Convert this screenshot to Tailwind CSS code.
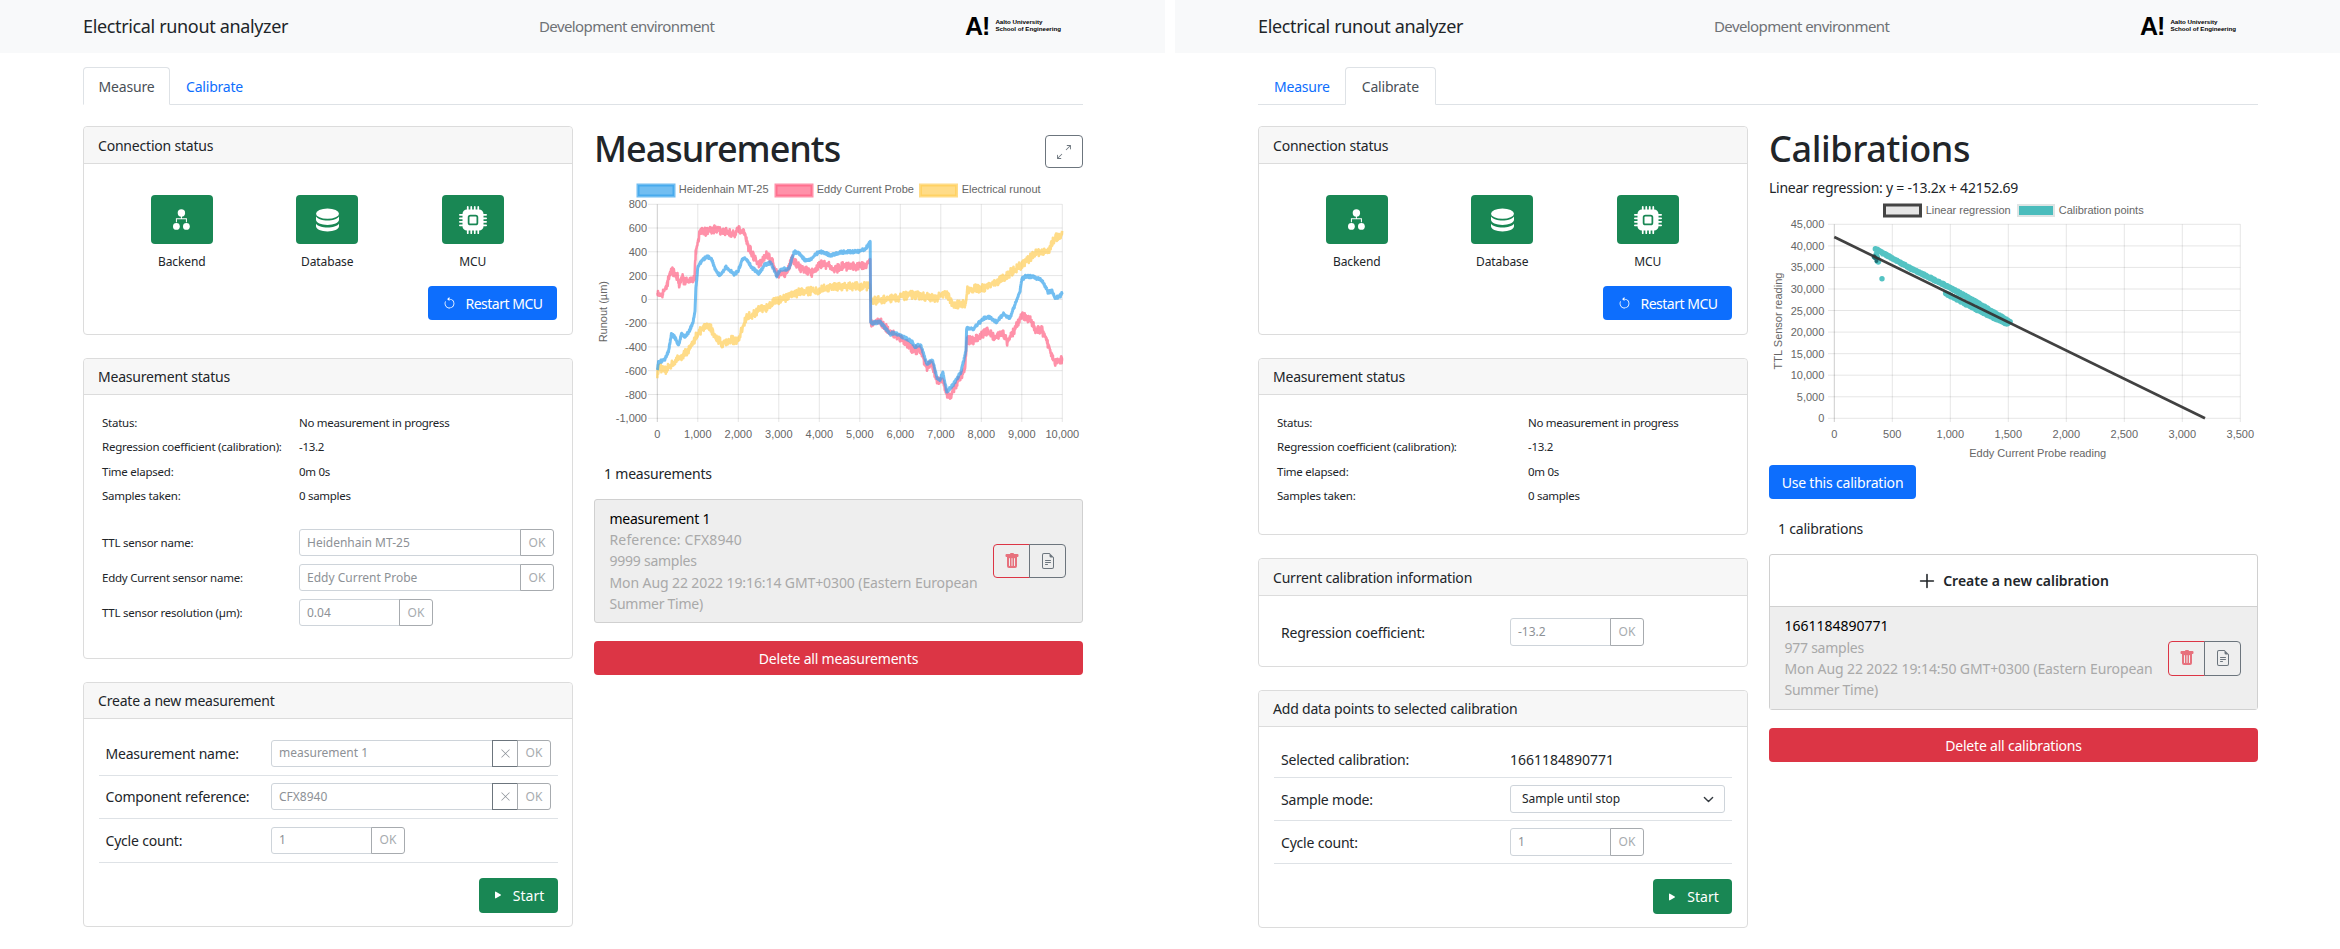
<!doctype html>
<html lang="en">
<head>
<meta charset="utf-8">
<title>Electrical runout analyzer</title>
<script src="https://cdn.jsdelivr.net/npm/@tailwindcss/browser@4"></script>
</head>
<body class="bg-white">
<svg class="hidden" xmlns="http://www.w3.org/2000/svg">
  <symbol id="i-backend" viewBox="0 0 17 21"><circle cx="8.4" cy="4" r="3.7"/><circle cx="3.4" cy="17.4" r="3.4"/><circle cx="13.4" cy="17.4" r="3.4"/><path d="M7.9 7h1v2.2h5v4h-1v-3H3.9v3h-1v-4h5z"/></symbol>
  <symbol id="i-db" viewBox="0 0 16 16"><ellipse cx="8" cy="3.6" rx="8" ry="3.6"/><path d="M0 5.6v2.2C0 9.8 3.6 11.4 8 11.4s8-1.6 8-3.6V5.6C14.6 7.4 11.6 8.4 8 8.4S1.4 7.4 0 5.6z"/><path d="M0 10.6v1.8C0 14.4 3.6 16 8 16s8-1.6 8-3.6v-1.8C14.6 12.4 11.6 13.2 8 13.2S1.4 12.4 0 10.6z"/></symbol>
  <symbol id="i-cpu" viewBox="0 0 16 16"><path d="M6.5 6a.5.5 0 0 0-.5.5v3a.5.5 0 0 0 .5.5h3a.5.5 0 0 0 .5-.5v-3a.5.5 0 0 0-.5-.5h-3z"/><path d="M5.5.5a.5.5 0 0 0-1 0V2A2.5 2.5 0 0 0 2 4.5H.5a.5.5 0 0 0 0 1H2v1H.5a.5.5 0 0 0 0 1H2v1H.5a.5.5 0 0 0 0 1H2v1H.5a.5.5 0 0 0 0 1H2A2.5 2.5 0 0 0 4.5 14v1.5a.5.5 0 0 0 1 0V14h1v1.5a.5.5 0 0 0 1 0V14h1v1.5a.5.5 0 0 0 1 0V14h1v1.5a.5.5 0 0 0 1 0V14a2.5 2.5 0 0 0 2.5-2.5h1.5a.5.5 0 0 0 0-1H14v-1h1.5a.5.5 0 0 0 0-1H14v-1h1.5a.5.5 0 0 0 0-1H14v-1h1.5a.5.5 0 0 0 0-1H14A2.5 2.5 0 0 0 11.5 2V.5a.5.5 0 0 0-1 0V2h-1V.5a.5.5 0 0 0-1 0V2h-1V.5a.5.5 0 0 0-1 0V2h-1V.5zm1 4.5h3A1.5 1.5 0 0 1 11 6.5v3A1.5 1.5 0 0 1 9.5 11h-3A1.5 1.5 0 0 1 5 9.5v-3A1.5 1.5 0 0 1 6.5 5z"/></symbol>
  <symbol id="i-restart" viewBox="0 0 16 16"><path fill-rule="evenodd" d="M8 3a5 5 0 1 1-4.546 2.914.5.5 0 0 0-.908-.417A6 6 0 1 0 8 2v1z"/><path d="M8 4.466V.534a.25.25 0 0 0-.41-.192L5.23 2.308a.25.25 0 0 0 0 .384l2.36 1.966A.25.25 0 0 0 8 4.466z"/></symbol>
  <symbol id="i-expand" viewBox="0 0 16 16"><path fill-rule="evenodd" d="M5.828 10.172a.5.5 0 0 0-.707 0l-4.096 4.096V11.5a.5.5 0 0 0-1 0v3.975a.5.5 0 0 0 .5.5H4.5a.5.5 0 0 0 0-1H1.732l4.096-4.096a.5.5 0 0 0 0-.707zm4.344-4.344a.5.5 0 0 0 .707 0l4.096-4.096V4.5a.5.5 0 1 0 1 0V.525a.5.5 0 0 0-.5-.5H11.5a.5.5 0 0 0 0 1h2.768l-4.096 4.096a.5.5 0 0 0 0 .707z"/></symbol>
  <symbol id="i-trash" viewBox="0 0 16 16"><path d="M2.5 1a1 1 0 0 0-1 1v1a1 1 0 0 0 1 1H3v9a2 2 0 0 0 2 2h6a2 2 0 0 0 2-2V4h.5a1 1 0 0 0 1-1V2a1 1 0 0 0-1-1H10a1 1 0 0 0-1-1H7a1 1 0 0 0-1 1H2.5zm3 4a.5.5 0 0 1 .5.5v7a.5.5 0 0 1-1 0v-7a.5.5 0 0 1 .5-.5zM8 5a.5.5 0 0 1 .5.5v7a.5.5 0 0 1-1 0v-7A.5.5 0 0 1 8 5zm3 .5v7a.5.5 0 0 1-1 0v-7a.5.5 0 0 1 1 0z"/></symbol>
  <symbol id="i-file" viewBox="0 0 16 16"><path d="M5.5 7a.5.5 0 0 0 0 1h5a.5.5 0 0 0 0-1h-5zM5 9.5a.5.5 0 0 1 .5-.5h5a.5.5 0 0 1 0 1h-5a.5.5 0 0 1-.5-.5zm0 2a.5.5 0 0 1 .5-.5h2a.5.5 0 0 1 0 1h-2a.5.5 0 0 1-.5-.5z"/><path d="M9.5 0H4a2 2 0 0 0-2 2v12a2 2 0 0 0 2 2h8a2 2 0 0 0 2-2V4.5L9.5 0zm0 1v2A1.5 1.5 0 0 0 11 4.5h2V14a1 1 0 0 1-1 1H4a1 1 0 0 1-1-1V2a1 1 0 0 1 1-1h5.5z"/></symbol>
  <symbol id="i-play" viewBox="0 0 16 16"><path d="m11.596 8.697-6.363 3.692c-.54.313-1.233-.066-1.233-.697V4.308c0-.63.692-1.01 1.233-.696l6.363 3.692a.802.802 0 0 1 0 1.393z"/></symbol>
  <symbol id="i-x" viewBox="0 0 16 16"><path d="M2.146 2.854a.5.5 0 1 1 .708-.708L8 7.293l5.146-5.147a.5.5 0 0 1 .708.708L8.707 8l5.147 5.146a.5.5 0 0 1-.708.708L8 8.707l-5.146 5.147a.5.5 0 0 1-.708-.708L7.293 8 2.146 2.854Z"/></symbol>
  <symbol id="i-plus" viewBox="0 0 16 16"><path fill-rule="evenodd" d="M8 1.6a.7.7 0 0 1 .7.7v5h5a.7.7 0 0 1 0 1.4h-5v5a.7.7 0 0 1-1.4 0v-5h-5a.7.7 0 0 1 0-1.4h5v-5A.7.7 0 0 1 8 1.6Z"/></symbol>
</svg>

<div class="flex gap-[10px] w-[2340px] h-[949px] overflow-hidden font-['Noto_Sans',sans-serif] text-[#212529] text-[14px]">

  <!-- ================= MEASURE ================= -->
  <section class="w-[1165px] shrink-0">
    <header class="h-[53px] bg-[#f8f9fa] pl-[83px] pr-[82px] flex items-center">
      <div class="w-[456px] text-[18px] tracking-[-0.35px]">Electrical runout analyzer</div>
      <div class="w-[426px] text-[15px] text-[#6f7276] tracking-[-0.6px]">Development environment</div>
      <div class="flex items-center gap-[6px] text-black font-['Liberation_Sans',sans-serif]">
        <span class="font-bold text-[25px] leading-[25px] tracking-[-1px]">A!</span>
        <span class="font-bold text-[6.2px] leading-[7px] whitespace-nowrap pb-[3px]">Aalto University<br>School of Engineering</span>
      </div>
    </header>
    <div class="pl-[83px] pr-[82px]">
      <nav class="mt-[14px] h-[38px] border-b border-[#dee2e6] flex">
        <div class="h-[38px] w-[87px] border border-[#dee2e6] border-b-white bg-white rounded-t-[4px] flex items-center justify-center text-[#495057] tracking-[-0.2px]">Measure</div>
        <div class="h-[38px] pl-[16px] flex items-center text-[#0d6efd] tracking-[-0.2px]">Calibrate</div>
      </nav>
      <div class="mt-[21px] grid grid-cols-[490px_490px] gap-[21px]">
        <div class="flex flex-col gap-[23px]">
          <!-- Connection -->
          <div class="border border-[#dcdcdc] rounded-[4px] h-[209px]">
            <div class="h-[37px] bg-[#f7f7f7] border-b border-[#dcdcdc] rounded-t-[4px] px-[14px] flex items-center tracking-[-0.2px]">Connection status</div>
            <div class="pt-[31px] pl-[25px]">
              <div class="grid grid-cols-[145.5px_145.5px_145.5px]">
                <div class="flex flex-col items-center"><div class="w-[62px] h-[49px] bg-[#198754] rounded-[4px] flex items-center justify-center"><svg class="w-[17px] h-[21px] fill-white"><use href="#i-backend"/></svg></div><div class="mt-[9px] text-[12px] leading-[18px] tracking-[-0.1px]">Backend</div></div>
                <div class="flex flex-col items-center"><div class="w-[62px] h-[49px] bg-[#198754] rounded-[4px] flex items-center justify-center"><svg class="w-[23px] h-[26px] fill-white"><use href="#i-db"/></svg></div><div class="mt-[9px] text-[12px] leading-[18px] tracking-[-0.1px]">Database</div></div>
                <div class="flex flex-col items-center"><div class="w-[62px] h-[49px] bg-[#198754] rounded-[4px] flex items-center justify-center"><svg class="w-[28px] h-[28px] fill-white"><use href="#i-cpu"/></svg></div><div class="mt-[9px] text-[12px] leading-[18px] tracking-[-0.1px]">MCU</div></div>
              </div>
              <div class="mt-[15px] flex justify-end pr-[15px]">
                <button class="w-[129px] h-[34px] bg-[#0d6efd] text-white rounded-[4px] flex items-center justify-center gap-[10px] tracking-[-0.5px]"><svg class="w-[13px] h-[13px] fill-white"><use href="#i-restart"/></svg>Restart MCU</button>
              </div>
            </div>
          </div>
          <!-- Status -->
          <div class="border border-[#dcdcdc] rounded-[4px] h-[301px]">
            <div class="h-[36px] bg-[#f7f7f7] border-b border-[#dcdcdc] rounded-t-[4px] px-[14px] flex items-center tracking-[-0.2px]">Measurement status</div>
            <div class="pt-[15px] pl-[18px] text-[11.5px] tracking-[-0.25px]">
              <div class="h-[24.5px] flex items-center"><span class="w-[197px]">Status:</span><span class="tracking-[-0.3px]">No measurement in progress</span></div>
              <div class="h-[24.5px] flex items-center"><span class="w-[197px]">Regression coefficient (calibration):</span><span class="tracking-[-0.3px]">-13.2</span></div>
              <div class="h-[24.5px] flex items-center"><span class="w-[197px]">Time elapsed:</span><span class="tracking-[-0.3px]">0m 0s</span></div>
              <div class="h-[24.5px] flex items-center"><span class="w-[197px]">Samples taken:</span><span class="tracking-[-0.3px]">0 samples</span></div>
              <div class="mt-[21px] flex flex-col gap-[8px]">
                <div class="h-[27px] flex items-center"><span class="w-[197px]">TTL sensor name:</span><div class="w-[222px] h-[27px] border border-[#ced4da] rounded-l-[3px] px-[7px] flex items-center text-[12px] text-[#8d9196] tracking-normal">Heidenhain MT-25</div><div class="w-[34px] h-[27px] -ml-px border border-[#a7abaf] rounded-r-[3px] flex items-center justify-center text-[12px] text-[#a7abaf] tracking-normal">OK</div></div>
                <div class="h-[27px] flex items-center"><span class="w-[197px]">Eddy Current sensor name:</span><div class="w-[222px] h-[27px] border border-[#ced4da] rounded-l-[3px] px-[7px] flex items-center text-[12px] text-[#8d9196] tracking-normal">Eddy Current Probe</div><div class="w-[34px] h-[27px] -ml-px border border-[#a7abaf] rounded-r-[3px] flex items-center justify-center text-[12px] text-[#a7abaf] tracking-normal">OK</div></div>
                <div class="h-[27px] flex items-center"><span class="w-[197px]">TTL sensor resolution (µm):</span><div class="w-[101px] h-[27px] border border-[#ced4da] rounded-l-[3px] px-[7px] flex items-center text-[12px] text-[#8d9196] tracking-normal">0.04</div><div class="w-[34px] h-[27px] -ml-px border border-[#a7abaf] rounded-r-[3px] flex items-center justify-center text-[12px] text-[#a7abaf] tracking-normal">OK</div></div>
              </div>
            </div>
          </div>
          <!-- Create -->
          <div class="border border-[#dcdcdc] rounded-[4px] h-[245px]">
            <div class="h-[36px] bg-[#f7f7f7] border-b border-[#dcdcdc] rounded-t-[4px] px-[14px] flex items-center tracking-[-0.2px]">Create a new measurement</div>
            <div class="pt-[13px] px-[14.5px]">
              <div class="h-[43.5px] border-b border-[#dee2e6] flex items-center pl-[7px] tracking-[-0.2px]"><span class="w-[165.5px]">Measurement name:</span><div class="w-[222px] h-[27px] border border-[#ced4da] rounded-l-[3px] px-[7px] flex items-center text-[12px] text-[#8d9196] tracking-normal">measurement 1</div><div class="w-[26px] h-[27px] -ml-px border border-[#6c757d] flex items-center justify-center"><svg class="w-[11px] h-[11px] fill-[#8a9097]"><use href="#i-x"/></svg></div><div class="w-[34px] h-[27px] -ml-px border border-[#a7abaf] rounded-r-[3px] flex items-center justify-center text-[12px] text-[#a7abaf] tracking-normal">OK</div></div>
              <div class="h-[43.5px] border-b border-[#dee2e6] flex items-center pl-[7px] tracking-[-0.2px]"><span class="w-[165.5px]">Component reference:</span><div class="w-[222px] h-[27px] border border-[#ced4da] rounded-l-[3px] px-[7px] flex items-center text-[12px] text-[#8d9196] tracking-normal">CFX8940</div><div class="w-[26px] h-[27px] -ml-px border border-[#6c757d] flex items-center justify-center"><svg class="w-[11px] h-[11px] fill-[#8a9097]"><use href="#i-x"/></svg></div><div class="w-[34px] h-[27px] -ml-px border border-[#a7abaf] rounded-r-[3px] flex items-center justify-center text-[12px] text-[#a7abaf] tracking-normal">OK</div></div>
              <div class="h-[43.5px] border-b border-[#dee2e6] flex items-center pl-[7px] tracking-[-0.2px]"><span class="w-[165.5px]">Cycle count:</span><div class="w-[101px] h-[27px] border border-[#ced4da] rounded-l-[3px] px-[7px] flex items-center text-[12px] text-[#8d9196] tracking-normal">1</div><div class="w-[34px] h-[27px] -ml-px border border-[#a7abaf] rounded-r-[3px] flex items-center justify-center text-[12px] text-[#a7abaf] tracking-normal">OK</div></div>
              <div class="mt-[15px] flex justify-end">
                <button class="w-[79px] h-[35px] bg-[#198754] text-white rounded-[4px] flex items-center justify-center gap-[9px]"><svg class="w-[12px] h-[12px] fill-white"><use href="#i-play"/></svg>Start</button>
              </div>
            </div>
          </div>
        </div>

        <!-- Measurements column -->
        <div class="w-[489px]">
          <div class="h-[50px] flex items-start justify-between">
            <h1 class="text-[36px] leading-[46px] font-medium tracking-[-1px]">Measurements</h1>
            <button class="mt-[9px] w-[38px] h-[33px] border border-[#6c757d] rounded-[4px] flex items-center justify-center"><svg class="w-[14px] h-[14px] fill-[#6c757d]"><use href="#i-expand"/></svg></button>
          </div>
          <svg id="chart1" class="block w-[489px] h-[270px] font-['Liberation_Sans',sans-serif] text-[11px] fill-[#666]" viewBox="594 176 489 270">
            <path d="M648 204.3H1062.3M648 228H1062.3M648 251.8H1062.3M648 275.6H1062.3M648 299.4H1062.3M648 323.1H1062.3M648 346.9H1062.3M648 370.7H1062.3M648 394.5H1062.3M648 418.3H1062.3M697.8 204.3V422M738.3 204.3V422M778.8 204.3V422M819.3 204.3V422M859.8 204.3V422M900.3 204.3V422M940.8 204.3V422M981.3 204.3V422M1021.8 204.3V422M1062.3 204.3V422" stroke="rgba(0,0,0,.1)" fill="none"/>
            <path d="M657.3 204.3V422" stroke="rgba(0,0,0,.2)" fill="none"/>
            <path id="s-y" fill="none" stroke="rgba(255,205,86,.7)" stroke-width="2.6" stroke-linejoin="round"/>
            <path id="s-r" fill="none" stroke="rgba(255,99,132,.7)" stroke-width="2.6" stroke-linejoin="round"/>
            <path id="s-b" fill="none" stroke="rgba(54,162,235,.7)" stroke-width="3" stroke-linejoin="round"/>
            <rect x="638" y="185" width="36" height="11" fill="rgba(54,162,235,.7)" stroke="rgba(54,162,235,.7)" stroke-width="3"/>
            <rect x="776" y="185" width="36" height="11" fill="rgba(255,99,132,.7)" stroke="rgba(255,99,132,.7)" stroke-width="3"/>
            <rect x="920.5" y="185" width="36" height="11" fill="rgba(255,205,86,.7)" stroke="rgba(255,205,86,.7)" stroke-width="3"/>
            <text x="678.7" y="193">Heidenhain MT-25</text><text x="816.7" y="193">Eddy Current Probe</text><text x="961.7" y="193">Electrical runout</text>
            <g text-anchor="end"><text x="647" y="208">800</text><text x="647" y="232">600</text><text x="647" y="255.8">400</text><text x="647" y="279.6">200</text><text x="647" y="303.4">0</text><text x="647" y="327">-200</text><text x="647" y="351">-400</text><text x="647" y="374.7">-600</text><text x="647" y="398.5">-800</text><text x="647" y="422.3">-1,000</text></g>
            <g text-anchor="middle"><text x="657.3" y="438">0</text><text x="697.8" y="438">1,000</text><text x="738.3" y="438">2,000</text><text x="778.8" y="438">3,000</text><text x="819.3" y="438">4,000</text><text x="859.8" y="438">5,000</text><text x="900.3" y="438">6,000</text><text x="940.8" y="438">7,000</text><text x="981.3" y="438">8,000</text><text x="1021.8" y="438">9,000</text><text x="1062.3" y="438">10,000</text></g>
            <text text-anchor="middle" transform="translate(606.5 311.7) rotate(-90)">Runout (µm)</text>
          </svg>
          <div class="mt-[17px] pl-[10px] leading-[21px] tracking-[-0.2px]">1 measurements</div>
          <div class="mt-[15px] h-[124px] bg-[#eeeeee] border border-[#d0d0d0] rounded-[3px] pl-[14.5px] pr-[16px] flex items-center justify-between">
            <div class="leading-[21.3px] text-[#a9a9a9] whitespace-nowrap tracking-[-0.25px]"><div class="text-black">measurement 1</div><span class="tracking-[0.15px]">Reference: CFX8940</span><br>9999 samples<br><span class="tracking-[-0.1px]">Mon Aug 22 2022 19:16:14 GMT+0300 (Eastern European</span><br>Summer Time)</div>
            <div class="flex"><button class="w-[37px] h-[34px] border border-[#dc3545] rounded-l-[4px] flex items-center justify-center"><svg class="w-[16px] h-[16px] fill-[#e7717d]"><use href="#i-trash"/></svg></button><button class="w-[37px] h-[34px] -ml-px border border-[#6c757d] rounded-r-[4px] flex items-center justify-center"><svg class="w-[16px] h-[16px] fill-[#6c757d]"><use href="#i-file"/></svg></button></div>
          </div>
          <button class="mt-[18px] w-full h-[34px] bg-[#dc3545] text-white rounded-[4px] tracking-[-0.2px]">Delete all measurements</button>
        </div>
      </div>
    </div>
  </section>

  <!-- ================= CALIBRATE ================= -->
  <section class="w-[1165px] shrink-0">
    <header class="h-[53px] bg-[#f8f9fa] pl-[83px] pr-[82px] flex items-center">
      <div class="w-[456px] text-[18px] tracking-[-0.35px]">Electrical runout analyzer</div>
      <div class="w-[426px] text-[15px] text-[#6f7276] tracking-[-0.6px]">Development environment</div>
      <div class="flex items-center gap-[6px] text-black font-['Liberation_Sans',sans-serif]">
        <span class="font-bold text-[25px] leading-[25px] tracking-[-1px]">A!</span>
        <span class="font-bold text-[6.2px] leading-[7px] whitespace-nowrap pb-[3px]">Aalto University<br>School of Engineering</span>
      </div>
    </header>
    <div class="pl-[83px] pr-[82px]">
      <nav class="mt-[14px] h-[38px] border-b border-[#dee2e6] flex">
        <div class="h-[38px] pl-[16px] pr-[15px] flex items-center text-[#0d6efd] tracking-[-0.2px]">Measure</div>
        <div class="h-[38px] w-[91px] border border-[#dee2e6] border-b-white bg-white rounded-t-[4px] flex items-center justify-center text-[#495057] tracking-[-0.2px]">Calibrate</div>
      </nav>
      <div class="mt-[21px] grid grid-cols-[490px_490px] gap-[21px]">
        <div class="flex flex-col gap-[23px]">
          <div class="border border-[#dcdcdc] rounded-[4px] h-[209px]">
            <div class="h-[37px] bg-[#f7f7f7] border-b border-[#dcdcdc] rounded-t-[4px] px-[14px] flex items-center tracking-[-0.2px]">Connection status</div>
            <div class="pt-[31px] pl-[25px]">
              <div class="grid grid-cols-[145.5px_145.5px_145.5px]">
                <div class="flex flex-col items-center"><div class="w-[62px] h-[49px] bg-[#198754] rounded-[4px] flex items-center justify-center"><svg class="w-[17px] h-[21px] fill-white"><use href="#i-backend"/></svg></div><div class="mt-[9px] text-[12px] leading-[18px] tracking-[-0.1px]">Backend</div></div>
                <div class="flex flex-col items-center"><div class="w-[62px] h-[49px] bg-[#198754] rounded-[4px] flex items-center justify-center"><svg class="w-[23px] h-[26px] fill-white"><use href="#i-db"/></svg></div><div class="mt-[9px] text-[12px] leading-[18px] tracking-[-0.1px]">Database</div></div>
                <div class="flex flex-col items-center"><div class="w-[62px] h-[49px] bg-[#198754] rounded-[4px] flex items-center justify-center"><svg class="w-[28px] h-[28px] fill-white"><use href="#i-cpu"/></svg></div><div class="mt-[9px] text-[12px] leading-[18px] tracking-[-0.1px]">MCU</div></div>
              </div>
              <div class="mt-[15px] flex justify-end pr-[15px]">
                <button class="w-[129px] h-[34px] bg-[#0d6efd] text-white rounded-[4px] flex items-center justify-center gap-[10px] tracking-[-0.5px]"><svg class="w-[13px] h-[13px] fill-white"><use href="#i-restart"/></svg>Restart MCU</button>
              </div>
            </div>
          </div>
          <div class="border border-[#dcdcdc] rounded-[4px] h-[177px]">
            <div class="h-[36px] bg-[#f7f7f7] border-b border-[#dcdcdc] rounded-t-[4px] px-[14px] flex items-center tracking-[-0.2px]">Measurement status</div>
            <div class="pt-[15px] pl-[18px] text-[11.5px] tracking-[-0.25px]">
              <div class="h-[24.5px] flex items-center"><span class="w-[251px]">Status:</span><span class="tracking-[-0.3px]">No measurement in progress</span></div>
              <div class="h-[24.5px] flex items-center"><span class="w-[251px]">Regression coefficient (calibration):</span><span class="tracking-[-0.3px]">-13.2</span></div>
              <div class="h-[24.5px] flex items-center"><span class="w-[251px]">Time elapsed:</span><span class="tracking-[-0.3px]">0m 0s</span></div>
              <div class="h-[24.5px] flex items-center"><span class="w-[251px]">Samples taken:</span><span class="tracking-[-0.3px]">0 samples</span></div>
            </div>
          </div>
          <div class="border border-[#dcdcdc] rounded-[4px] h-[109px]">
            <div class="h-[37px] bg-[#f7f7f7] border-b border-[#dcdcdc] rounded-t-[4px] px-[14px] flex items-center tracking-[-0.2px]">Current calibration information</div>
            <div class="pt-[22px] pl-[22px] flex items-center tracking-[-0.2px]"><span class="w-[229px]">Regression coefficient:</span><div class="w-[101px] h-[28px] border border-[#ced4da] rounded-l-[3px] px-[7px] flex items-center text-[12px] text-[#8d9196] tracking-normal">-13.2</div><div class="w-[34px] h-[28px] -ml-px border border-[#a7abaf] rounded-r-[3px] flex items-center justify-center text-[12px] text-[#a7abaf] tracking-normal">OK</div></div>
          </div>
          <div class="border border-[#dcdcdc] rounded-[4px] h-[238px]">
            <div class="h-[36px] bg-[#f7f7f7] border-b border-[#dcdcdc] rounded-t-[4px] px-[14px] flex items-center tracking-[-0.2px]">Add data points to selected calibration</div>
            <div class="pt-[8px] px-[15px]">
              <div class="h-[43px] border-b border-[#dee2e6] flex items-center pl-[7px] pt-[6px] tracking-[-0.2px]"><span class="w-[229px]">Selected calibration:</span><span class="tracking-normal">1661184890771</span></div>
              <div class="h-[43px] border-b border-[#dee2e6] flex items-center pl-[7px] tracking-[-0.2px]"><span class="w-[229px]">Sample mode:</span><div class="w-[215px] h-[28px] border border-[#ced4da] rounded-[3px] pl-[11px] pr-[10px] flex items-center justify-between text-[12px] tracking-normal">Sample until stop<svg class="w-[11px] h-[11px]" viewBox="0 0 16 16" fill="none" stroke="#343a40" stroke-width="2" stroke-linecap="round" stroke-linejoin="round"><path d="m2 5 6 6 6-6"/></svg></div></div>
              <div class="h-[43px] border-b border-[#dee2e6] flex items-center pl-[7px] tracking-[-0.2px]"><span class="w-[229px]">Cycle count:</span><div class="w-[101px] h-[28px] border border-[#ced4da] rounded-l-[3px] px-[7px] flex items-center text-[12px] text-[#8d9196] tracking-normal">1</div><div class="w-[34px] h-[28px] -ml-px border border-[#a7abaf] rounded-r-[3px] flex items-center justify-center text-[12px] text-[#a7abaf] tracking-normal">OK</div></div>
              <div class="mt-[15px] flex justify-end">
                <button class="w-[79px] h-[35px] bg-[#198754] text-white rounded-[4px] flex items-center justify-center gap-[9px]"><svg class="w-[12px] h-[12px] fill-white"><use href="#i-play"/></svg>Start</button>
              </div>
            </div>
          </div>
        </div>

        <!-- Calibrations column -->
        <div class="w-[489px]">
          <h1 class="text-[36px] leading-[46px] font-medium tracking-[-0.4px] h-[51px]">Calibrations</h1>
          <div class="leading-[21px] tracking-[-0.25px]">Linear regression: y = -13.2x + 42152.69</div>
          <svg id="chart2" class="block w-[489px] h-[267px] font-['Liberation_Sans',sans-serif] text-[11px] fill-[#666]" viewBox="1769 200 489 267">
            <path d="M1828 226.3H2240.3M1828 247.9H2240.3M1828 269.4H2240.3M1828 291H2240.3M1828 312.5H2240.3M1828 334.1H2240.3M1828 355.7H2240.3M1828 377.2H2240.3M1828 398.8H2240.3M1828 420.3H2240.3M1892.3 226.3V424M1950.3 226.3V424M2008.3 226.3V424M2066.3 226.3V424M2124.3 226.3V424M2182.3 226.3V424M2240.3 226.3V424" stroke="rgba(0,0,0,.1)" fill="none"/>
            <path d="M1834.3 226.3V424" stroke="rgba(0,0,0,.2)" fill="none"/>
            <path id="pts" fill="none" stroke="rgba(75,192,192,.95)" stroke-width="5.4" stroke-linecap="round"/>
            <path id="pts-dark" fill="none" stroke="#1f6d72" stroke-width="4" stroke-linecap="round"/>
            <path d="M1834.3 239L2205 420.3" stroke="#333" stroke-opacity=".93" stroke-width="2.7" fill="none"/>
            <rect x="1884.5" y="207" width="36" height="11" fill="#e6e6e6" stroke="#444" stroke-width="3"/>
            <rect x="2018" y="207" width="36" height="11" fill="#4abcbc" stroke="#dfe5e5" stroke-width="2"/>
            <text x="1925.7" y="215.5">Linear regression</text><text x="2058.7" y="215.5">Calibration points</text>
            <g text-anchor="end"><text x="1824.3" y="230">45,000</text><text x="1824.3" y="251.9">40,000</text><text x="1824.3" y="273.4">35,000</text><text x="1824.3" y="295">30,000</text><text x="1824.3" y="316.5">25,000</text><text x="1824.3" y="338.1">20,000</text><text x="1824.3" y="359.7">15,000</text><text x="1824.3" y="381.2">10,000</text><text x="1824.3" y="402.8">5,000</text><text x="1824.3" y="424.3">0</text></g>
            <g text-anchor="middle"><text x="1834.3" y="440">0</text><text x="1892.3" y="440">500</text><text x="1950.3" y="440">1,000</text><text x="2008.3" y="440">1,500</text><text x="2066.3" y="440">2,000</text><text x="2124.3" y="440">2,500</text><text x="2182.3" y="440">3,000</text><text x="2240.3" y="440">3,500</text><text x="2037.7" y="459">Eddy Current Probe reading</text></g>
            <text text-anchor="middle" transform="translate(1782 323) rotate(-90)">TTL Sensor reading</text>
          </svg>
          <button class="block w-[147px] h-[34px] bg-[#0d6efd] text-white rounded-[4px] tracking-[-0.2px]">Use this calibration</button>
          <div class="mt-[19px] pl-[9px] leading-[21px] tracking-[-0.2px]">1 calibrations</div>
          <div class="mt-[15px] border border-[#d0d0d0] rounded-[3px]">
            <div class="h-[52px] border-b border-[#d0d0d0] flex items-center justify-center gap-[7px] font-semibold"><svg class="w-[18px] h-[18px] fill-[#212529]"><use href="#i-plus"/></svg>Create a new calibration</div>
            <div class="h-[102px] bg-[#eeeeee] pl-[14.5px] pr-[16px] flex items-center justify-between">
              <div class="leading-[21.3px] text-[#a9a9a9] whitespace-nowrap tracking-[-0.25px]"><div class="text-black tracking-normal">1661184890771</div>977 samples<br><span class="tracking-[-0.1px]">Mon Aug 22 2022 19:14:50 GMT+0300 (Eastern European</span><br>Summer Time)</div>
              <div class="flex"><button class="w-[37px] h-[35px] border border-[#dc3545] rounded-l-[4px] flex items-center justify-center"><svg class="w-[16px] h-[16px] fill-[#e7717d]"><use href="#i-trash"/></svg></button><button class="w-[37px] h-[35px] -ml-px border border-[#6c757d] rounded-r-[4px] flex items-center justify-center"><svg class="w-[16px] h-[16px] fill-[#6c757d]"><use href="#i-file"/></svg></button></div>
            </div>
          </div>
          <button class="mt-[18px] w-full h-[34px] bg-[#dc3545] text-white rounded-[4px] tracking-[-0.2px]">Delete all calibrations</button>
        </div>
      </div>
    </div>
  </section>
</div>

<script>
(function () {
  var seed = 12345;
  function rnd() { seed = (seed * 16807) % 2147483647; return seed / 2147483647; }
  function X(v) { return 657.3 + v * 405 / 10000; }
  function Y(v) { return 204.3 + (800 - v) * 214 / 1800; }
  var blue = [0,-600,30,-530,200,-500,280,-430,350,-290,440,-320,520,-390,600,-290,680,-320,780,-270,880,-200,930,-100,950,80,1000,270,1100,330,1250,360,1350,330,1450,240,1550,200,1700,270,1900,210,2000,240,2100,340,2200,340,2350,260,2450,240,2500,210,2650,290,2800,310,2950,200,3050,250,3250,260,3380,400,3500,390,3650,330,3800,340,3950,390,4050,400,4300,370,4500,395,5000,405,5150,430,5260,490,5265,-200,5500,-190,5750,-290,5850,-280,6100,-320,6300,-360,6350,-400,6500,-380,6650,-540,6800,-510,6900,-660,6980,-680,7050,-610,7150,-780,7300,-720,7500,-610,7620,-430,7640,-240,7800,-250,8050,-160,8200,-150,8380,-190,8550,-120,8700,-160,8950,60,9000,170,9100,195,9250,190,9450,170,9550,130,9650,60,9750,70,9820,10,9950,30,10000,60];
  var red = [0,50,100,40,200,90,280,170,360,260,420,210,500,190,540,110,600,190,680,150,850,150,920,190,950,400,1020,520,1050,580,1200,570,1400,590,1700,570,1900,540,1950,590,2150,570,2250,440,2400,350,2500,290,2700,380,2850,310,2950,210,3200,220,3330,350,3500,270,3700,240,3850,220,4000,300,4200,290,4350,250,4600,280,5000,275,5150,290,5260,340,5265,-200,5500,-190,5800,-290,6000,-320,6300,-420,6500,-430,6650,-570,6780,-540,6900,-680,7050,-700,7200,-830,7400,-700,7600,-580,7640,-340,7800,-350,8000,-300,8150,-270,8350,-320,8550,-290,8650,-360,8800,-270,9000,-130,9200,-170,9350,-260,9500,-260,9700,-420,9820,-530,10000,-510];
  var yellow = [0,-640,30,-570,200,-600,400,-530,550,-490,700,-450,850,-390,950,-310,1150,-230,1300,-230,1450,-320,1600,-370,1800,-340,2000,-350,2100,-240,2200,-150,2350,-130,2500,-90,2700,-70,2800,-30,3000,-10,3200,20,3500,60,4000,80,4300,110,5000,110,5260,115,5270,-10,5400,-10,5800,10,6000,20,6300,40,6700,20,6900,10,7100,50,7200,20,7320,-60,7500,-30,7620,-40,7650,80,8100,100,8500,170,8700,220,9000,290,9200,350,9400,400,9650,400,9800,510,10000,550];
  function series(a, amp) {
    var d = '', k = 0;
    for (var v = 0; v <= 10000; v += 6) {
      while (k < a.length - 4 && a[k + 2] < v) k += 2;
      var t = Math.min(1, Math.max(0, (v - a[k]) / (a[k + 2] - a[k])));
      var r = rnd() - .5;
      var y = a[k + 1] + (a[k + 3] - a[k + 1]) * t + r * Math.abs(r) * 2 * amp;
      d += (d ? 'L' : 'M') + X(v).toFixed(1) + ' ' + Y(y).toFixed(1);
    }
    return d;
  }
  document.getElementById('s-y').setAttribute('d', series(yellow, 70));
  document.getElementById('s-r').setAttribute('d', series(red, 70));
  document.getElementById('s-b').setAttribute('d', series(blue, 24));

  function dots(line, n, j) {
    var d = '';
    for (var i = 0; i < n; i++) {
      var t = rnd() * (line.length / 2 - 1), s = Math.floor(t) * 2, f = t - Math.floor(t);
      var x = line[s] + (line[s + 2] - line[s]) * f + (rnd() - .5) * j;
      var y = line[s + 1] + (line[s + 3] - line[s + 1]) * f + (rnd() - .5) * j;
      d += 'M' + x.toFixed(1) + ' ' + y.toFixed(1) + 'h0';
    }
    return d;
  }
  document.getElementById('pts').setAttribute('d',
    dots([1875, 250.7, 1910, 270, 1946.7, 288, 1976.7, 304.3, 2010, 324], 600, 1.2) +
    dots([1945, 295, 1985, 316, 2008, 326], 150, 1.2) +
    dots([1876, 256, 1878, 264], 15, 1.5) + 'M1882 280.7h0');
  document.getElementById('pts-dark').setAttribute('d', dots([1874, 258, 1878, 264], 10, 1.5));
})();
</script>
</body>
</html>
